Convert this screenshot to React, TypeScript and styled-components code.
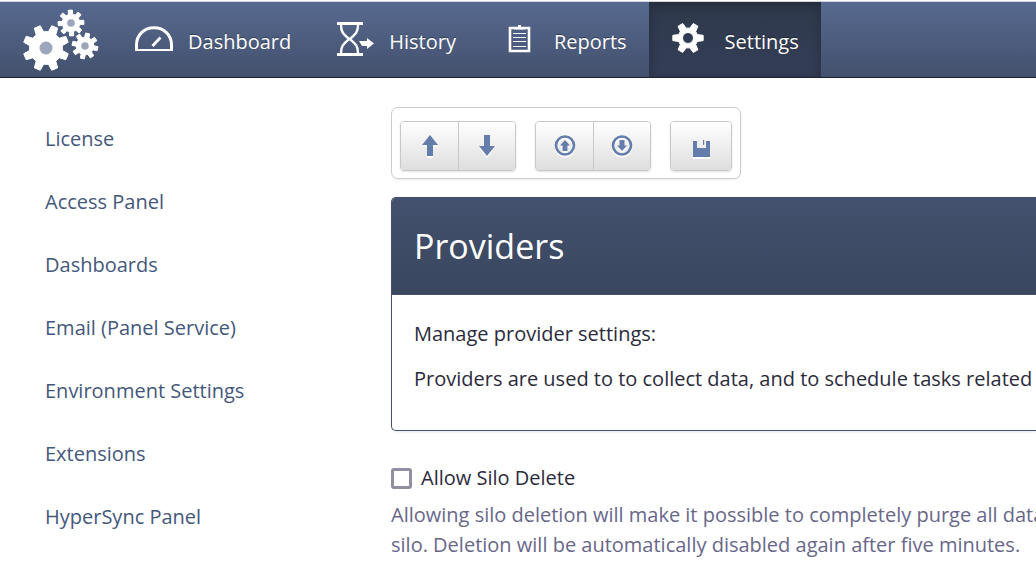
import React from "react";
import styled, { createGlobalStyle } from "styled-components";

const GlobalStyle = createGlobalStyle`
  *, *::before, *::after { box-sizing: border-box; }
  body {
    margin: 0;
    padding-top: 1px;
    background: #fff;
    color: #2b2b3c;
    font-family: "Open Sans", "Noto Sans", sans-serif;
    font-size: 20px;
    line-height: 30px;
    overflow-x: hidden;
  }
`;

const TopBar = styled.header`
  display: flex;
  height: 77px;
  padding-left: 22px;
  border-top: 1px solid #d4d4d8;
  border-bottom: 1px solid #1d2233;
  background: linear-gradient(#56698f, #44516e);
`;

const Logo = styled.a`
  display: flex;
  align-items: center;
  flex: none;
  width: 90px;
  padding-top: 2px;
`;

const Nav = styled.nav`
  display: flex;
`;

const NavLink = styled.a<{ $active?: boolean }>`
  display: flex;
  align-items: center;
  padding: 4px 22px 0 23px;
  color: #fff;
  text-decoration: none;
  text-shadow: 0 -1px 0 rgba(0, 0, 0, 0.35);
  background: ${(p) => (p.$active ? "linear-gradient(#2e394c, #343e57)" : "none")};
  box-shadow: ${(p) => (p.$active ? "inset 0 3px 12px rgba(0, 0, 0, 0.25)" : "none")};
`;

const IconSlot = styled.span`
  display: flex;
  flex: none;
  width: 53px;
  padding-bottom: 6px;
`;

const Layout = styled.div`
  display: grid;
  grid-template-columns: 391px minmax(0, 1fr);
  padding-top: 29px;
`;

const SideNav = styled.nav`
  display: flex;
  flex-direction: column;
  align-items: flex-start;
  gap: 33px;
  padding: 17px 0 0 45px;
`;

const SideLink = styled.a`
  color: #44587c;
  text-decoration: none;
`;

const Main = styled.main`
  overflow: hidden;
`;

const Toolbar = styled.div`
  display: inline-flex;
  padding: 13px 8px 7px;
  border: 1px solid #ccc;
  border-radius: 7px;
  gap: 19px;
  box-shadow: 0 1px 3px rgba(0, 0, 0, 0.08);
  vertical-align: top;
`;

const ButtonGroup = styled.div`
  display: flex;
  border: 1px solid #c8c8c8;
  border-radius: 4px;
  box-shadow: 0 1px 2px rgba(0, 0, 0, 0.12);
  overflow: hidden;
`;

const ToolButton = styled.button<{ $wide?: boolean }>`
  display: flex;
  align-items: center;
  justify-content: center;
  width: ${(p) => (p.$wide ? 60 : 57)}px;
  height: 48px;
  padding: 0;
  border: 0;
  background: linear-gradient(#fff, #dedede);
  color: #647dab;

  & + & {
    border-left: 1px solid #c8c8c8;
  }

  svg {
    filter: drop-shadow(0 2px 0 #fff);
  }
`;

const Panel = styled.section`
  margin-top: 18px;
  border: 1px solid #44506f;
  border-right: 0;
  border-radius: 5px 0 0 5px;
  box-shadow: 0 1px 3px rgba(0, 0, 0, 0.1);
  overflow: hidden;
`;

const PanelTitle = styled.h1`
  margin: 0;
  padding: 24px 22px;
  border-bottom: 1px solid #44506f;
  background: linear-gradient(#43516e, #39465e);
  color: #fff;
  font-size: 34px;
  font-weight: 400;
  line-height: 48px;
`;

const PanelBody = styled.div`
  padding: 24px 22px 36px;
`;

const Paragraph = styled.p`
  margin: 0;
  white-space: nowrap;

  & + & {
    margin-top: 15px;
  }
`;

const CheckRow = styled.label`
  display: flex;
  align-items: center;
  gap: 9px;
  margin-top: 32px;
`;

const Checkbox = styled.input`
  appearance: none;
  width: 21px;
  height: 21px;
  margin: 0;
  border: 3px solid #918fa0;
  border-radius: 3px;
  background: #fff;

  &:checked {
    background: #647dab;
  }
`;

const Hint = styled.p`
  margin: 7px 0 0;
  color: #686789;
  white-space: nowrap;
`;

/* Outline of a cog with tapered teeth, the first one pointing at `turn` degrees. */
function cog(cx: number, cy: number, outer: number, inner: number, teeth: number, turn: number, tip: number, root: number) {
  const pts: string[] = [];
  const at = (r: number, deg: number) => {
    const a = (deg * Math.PI) / 180;
    pts.push(`${(cx + r * Math.cos(a)).toFixed(2)} ${(cy + r * Math.sin(a)).toFixed(2)}`);
  };
  for (let i = 0; i < teeth; i++) {
    const mid = turn + (360 / teeth) * i;
    at(inner, mid - root);
    at(outer, mid - tip);
    at(outer, mid + tip);
    at(inner, mid + root);
  }
  return `M${pts.join("L")}Z`;
}

const LogoIcon = () => (
  <svg width="78" height="64" viewBox="0 0 78 64" aria-hidden="true">
    <g fill="#fff" stroke="#fff" strokeWidth="1" strokeLinejoin="round">
      <path d={cog(24, 39, 23, 16.5, 8, 22.5, 8, 14)} />
      <path d={cog(49, 14, 13, 8.8, 8, -3, 9, 14)} />
      <path d={cog(63, 37, 13, 8.8, 8, 12, 9, 14)} />
    </g>
    <g fill="#9ba6bc">
      <circle cx="24" cy="39" r="6.5" />
      <circle cx="49" cy="14" r="3.8" />
      <circle cx="63" cy="37" r="3.8" />
    </g>
  </svg>
);

const GaugeIcon = () => (
  <svg width="38" height="26" viewBox="0 0 38 26" fill="none" stroke="#fff" aria-hidden="true">
    <path d="M1.5 24V19C1.5 9 9 1.700 19 1.700S36.500 9 36.500 19V24" strokeWidth="3" />
    <path d="M0 24H38" strokeWidth="2" />
    <path d="M17.500 20L25.500 11.500" strokeWidth="2.800" />
  </svg>
);

const HourglassIcon = () => (
  <svg width="38" height="34" viewBox="0 0 38 34" aria-hidden="true">
    <path d="M1 0H27V3H1ZM1 31H27V34H1Z" fill="#fff" />
    <path d="M5 3C5 10 7.500 12 13 17C7.500 22 5 24 5 31M22 3C22 10 19.500 12 14 17C19.500 22 22 24 22 31" fill="none" stroke="#fff" strokeWidth="2.400" />
    <path d="M23 19H31V16L38 21.500L31 27V24H26Z" fill="#fff" />
  </svg>
);

const ClipboardIcon = () => (
  <svg width="30" height="28" viewBox="0 0 30 28" aria-hidden="true">
    <path d="M9 3H28V26H9Z" fill="none" stroke="#fff" strokeWidth="2.600" />
    <path d="M13 2H17V0H20V2H24V4.500H13Z" fill="#fff" />
    <path d="M12 8.500H25M12 12.500H25M12 16.500H25M12 21.500H25" stroke="#fff" strokeWidth="1" />
  </svg>
);

const CogIcon = () => (
  <svg width="32" height="32" viewBox="0 1 32 32" aria-hidden="true">
    <path
      fill="#fff"
      fillRule="evenodd"
      stroke="#fff"
      strokeWidth="1"
      strokeLinejoin="round"
      d={cog(16, 16, 15.4, 10, 6, 0, 10, 20) + "M21.500 16A5.500 5.500 0 1 0 10.500 16A5.500 5.500 0 1 0 21.500 16Z"}
    />
  </svg>
);

const Arrow = ({ down }: { down?: boolean }) => (
  <svg width="18" height="22" viewBox="0 0 18 22" aria-hidden="true">
    <path fill="currentColor" d={down ? "M6 0H12V11H17L9 21L1 11H6Z" : "M9 0L17 10H12V21H6V10H1Z"} />
  </svg>
);

const CircleArrow = ({ down }: { down?: boolean }) => (
  <svg width="22" height="22" viewBox="0 0 22 22" aria-hidden="true">
    <circle cx="11" cy="10.500" r="9" fill="none" stroke="currentColor" strokeWidth="2.600" />
    <path fill="currentColor" d={down ? "M8.500 5H13.500V10.500H16L11 16L6 10.500H8.500Z" : "M11 5L16 10.500H13.500V16H8.500V10.500H6Z"} />
  </svg>
);

const SaveIcon = () => (
  <svg width="17" height="22" viewBox="0 0 17 22" aria-hidden="true">
    <path fill="currentColor" d="M0 6H4V13H13V6H17V22H0ZM10 5H11.200V10H10Z" />
  </svg>
);

const links = [
  "License",
  "Access Panel",
  "Dashboards",
  "Email (Panel Service)",
  "Environment Settings",
  "Extensions",
  "HyperSync Panel",
];

const tabs = [
  { label: "Dashboard", Icon: GaugeIcon },
  { label: "History", Icon: HourglassIcon },
  { label: "Reports", Icon: ClipboardIcon },
  { label: "Settings", Icon: CogIcon, active: true },
];

export default function App() {
  return (
    <>
      <GlobalStyle />
      <TopBar>
        <Logo href="#" aria-label="Home">
          <LogoIcon />
        </Logo>
        <Nav>
          {tabs.map(({ label, Icon, active }) => (
            <NavLink key={label} href="#" $active={active} aria-current={active ? "page" : undefined}>
              <IconSlot>
                <Icon />
              </IconSlot>
              {label}
            </NavLink>
          ))}
        </Nav>
      </TopBar>
      <Layout>
        <SideNav>
          {links.map((label) => (
            <SideLink key={label} href="#">
              {label}
            </SideLink>
          ))}
        </SideNav>
        <Main>
          <Toolbar role="toolbar">
            <ButtonGroup>
              <ToolButton type="button" aria-label="Move up">
                <Arrow />
              </ToolButton>
              <ToolButton type="button" aria-label="Move down">
                <Arrow down />
              </ToolButton>
            </ButtonGroup>
            <ButtonGroup>
              <ToolButton type="button" aria-label="Move to top">
                <CircleArrow />
              </ToolButton>
              <ToolButton type="button" aria-label="Move to bottom">
                <CircleArrow down />
              </ToolButton>
            </ButtonGroup>
            <ButtonGroup>
              <ToolButton type="button" $wide aria-label="Save">
                <SaveIcon />
              </ToolButton>
            </ButtonGroup>
          </Toolbar>
          <Panel>
            <PanelTitle>Providers</PanelTitle>
            <PanelBody>
              <Paragraph>Manage provider settings:</Paragraph>
              <Paragraph>Providers are used to to collect data, and to schedule tasks related to</Paragraph>
            </PanelBody>
          </Panel>
          <CheckRow>
            <Checkbox type="checkbox" />
            Allow Silo Delete
          </CheckRow>
          <Hint>
            Allowing silo deletion will make it possible to completely purge all data
            <br />
            silo. Deletion will be automatically disabled again after five minutes.
          </Hint>
        </Main>
      </Layout>
    </>
  );
}
